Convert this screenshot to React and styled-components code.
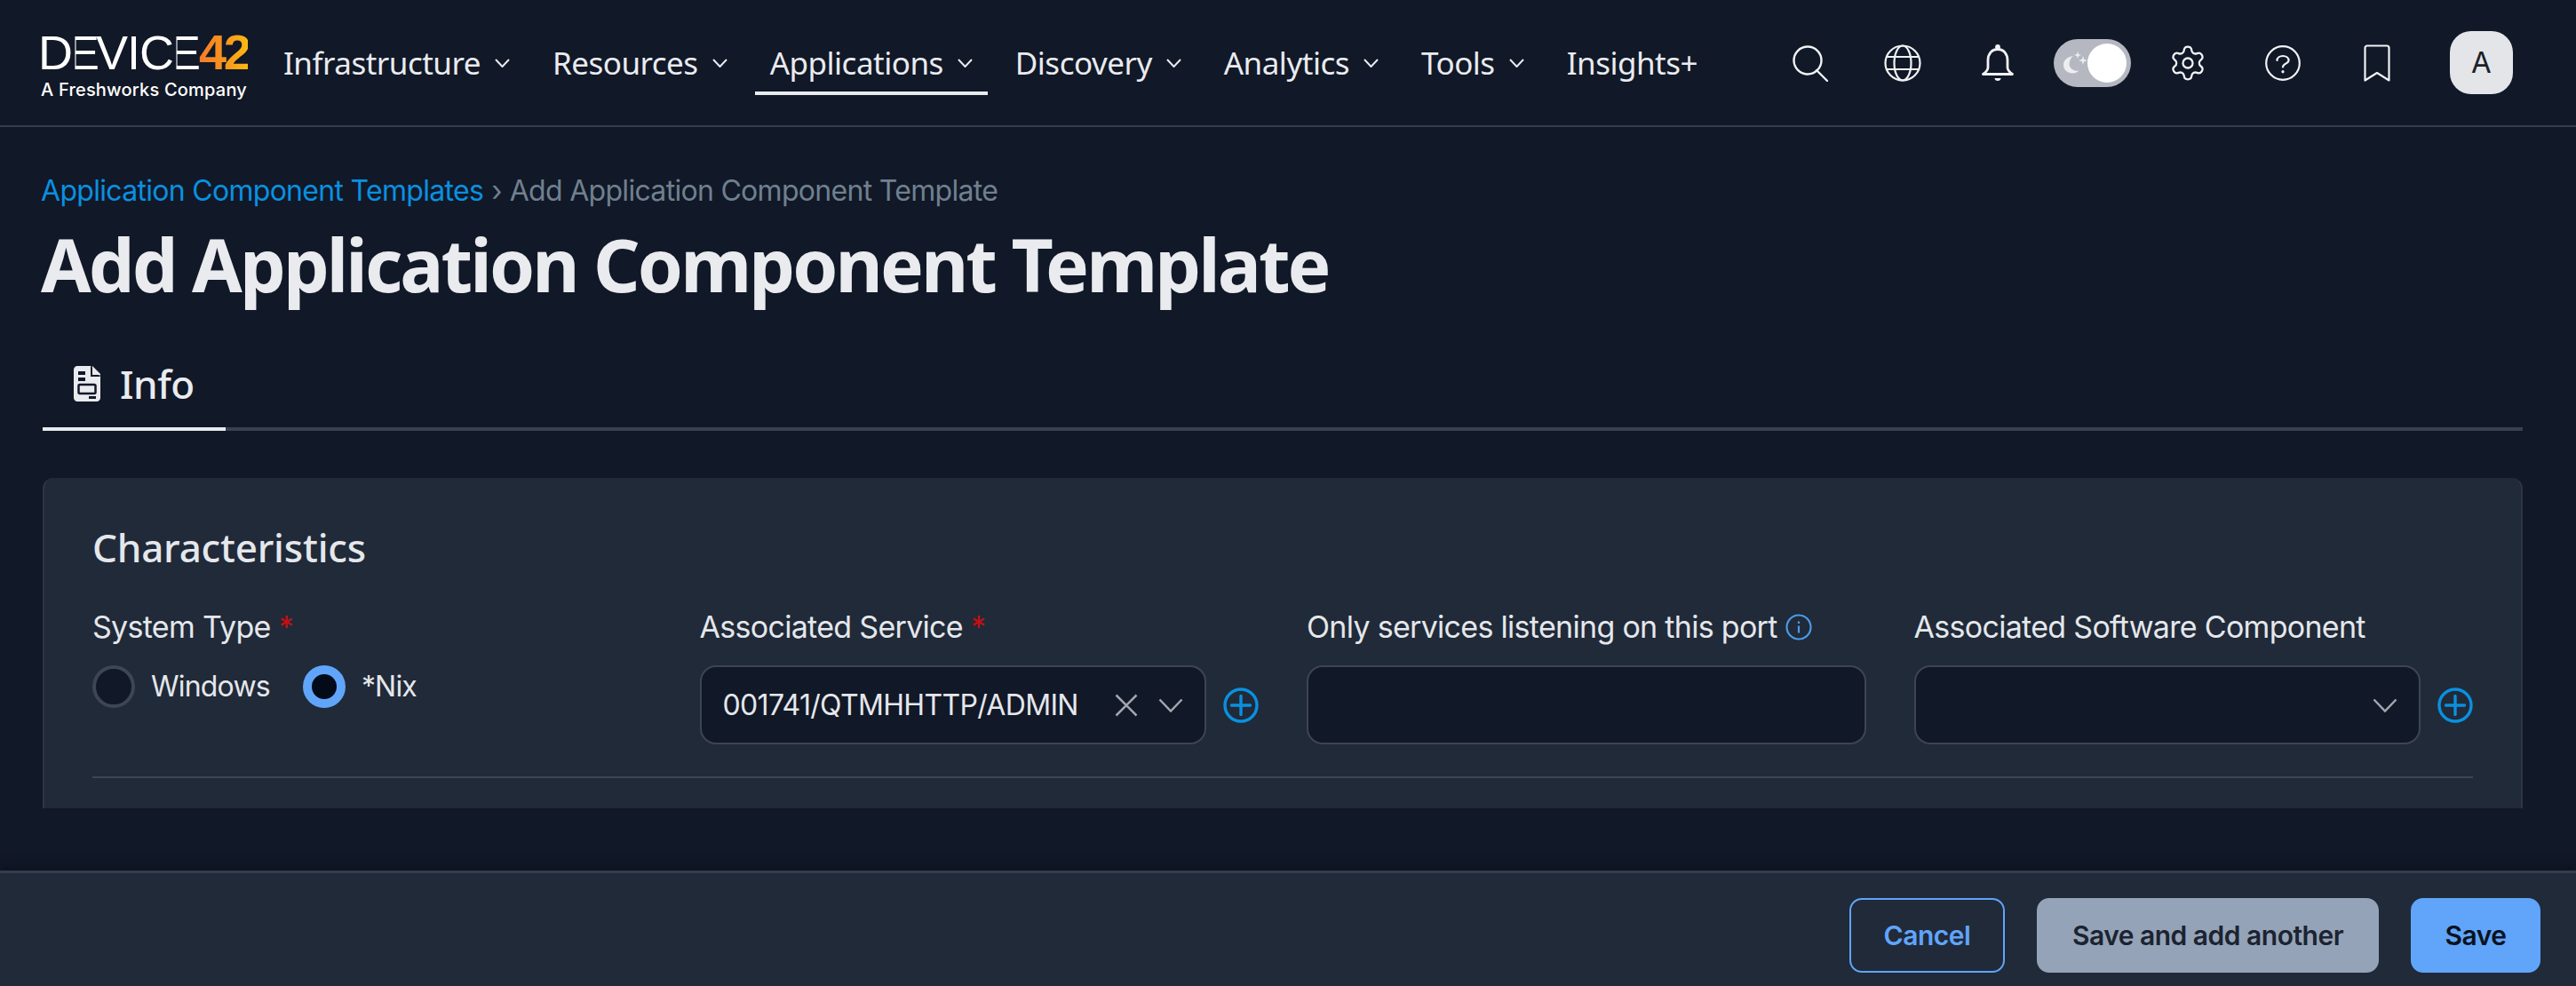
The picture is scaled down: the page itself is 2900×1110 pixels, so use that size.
import React from "react";
import styled, { createGlobalStyle } from "styled-components";
import { Settings } from "lucide-react";

const GlobalStyle = createGlobalStyle`
  html, body {
    margin: 0;
    padding: 0;
    background: #111827;
  }
  * { box-sizing: border-box; }
`;

const DISPLAY = `"Noto Sans", "Open Sans", sans-serif`;
const BODY = `Inter, "Liberation Sans", sans-serif`;

/* ---------- header ---------- */

const Page = styled.div`
  width: 2900px;
  height: 1110px;
  display: flex;
  flex-direction: column;
  background: #111827;
  overflow: hidden;
`;

const Header = styled.header`
  height: 143px;
  flex: none;
  display: flex;
  align-items: center;
  padding: 0 71px 0 46px;
  border-bottom: 2px solid #353c4b;
`;

const Logo = styled.div`
  width: 232px;
  flex: none;
  display: flex;
  flex-direction: column;
  margin-top: 8px;
  color: #fff;
`;

const LogoMark = styled.div`
  display: flex;
  align-items: center;
  height: 42px;
  margin-left: -3px;
  font: 400 54px/42px "Liberation Sans", sans-serif;
  letter-spacing: -1px;
`;

const LogoE = styled.span`
  display: inline-block;
  clip-path: inset(0 0 0 24%);
  margin: 0 -3px 0 -5px;
`;

const Logo42 = styled.span`
  font-weight: 700;
  font-size: 56px;
  margin-left: 2px;
  letter-spacing: -3.5px;
  background: linear-gradient(90deg, #f47b2a 0%, #f7941d 50%, #fdb913 100%);
  -webkit-background-clip: text;
  background-clip: text;
  color: transparent;
`;

const LogoSub = styled.div`
  margin-top: 10px;
  font: 500 20px/22px ${BODY};
  letter-spacing: 0.2px;
  white-space: nowrap;
`;

const Nav = styled.nav`
  display: flex;
  align-items: center;
  gap: 14px;
  margin-left: 24px;
`;

const NavItem = styled.a`
  height: 68px;
  margin-top: 4px;
  display: flex;
  align-items: center;
  gap: 16px;
  padding: 0 17px;
  border-bottom: 4px solid ${(p) => (p.$active ? "#e9ebef" : "transparent")};
  color: #e9ebef;
  font: 400 35px/44px ${DISPLAY};
  letter-spacing: -0.5px;
  white-space: nowrap;
`;

const HeaderIcons = styled.div`
  margin-left: auto;
  display: flex;
  align-items: center;
`;

const IconSlot = styled.span`
  display: flex;
  justify-content: center;
  width: ${(p) => p.$w}px;
  margin-right: ${(p) => p.$mr || 0}px;

  & > svg {
    flex: none;
  }
`;

const ThemeToggle = styled.div`
  width: 87px;
  height: 54px;
  border-radius: 27px;
  background: #b5b8c0;
  display: flex;
  align-items: center;
  justify-content: space-between;
  padding: 0 5px 0 11px;
  margin-right: 45px;
`;

const ToggleKnob = styled.span`
  width: 44px;
  height: 44px;
  border-radius: 50%;
  background: #fff;
`;

const Avatar = styled.div`
  width: 71px;
  height: 71px;
  border-radius: 24px;
  background: #e3e5e9;
  color: #1d2026;
  display: flex;
  align-items: center;
  justify-content: center;
  font: 400 33px/1 ${BODY};
`;

/* ---------- page title ---------- */

const Main = styled.main`
  flex: 1;
  min-height: 0;
  padding: 54px 60px 0 46px;
`;

const Breadcrumb = styled.div`
  display: flex;
  gap: 9px;
  font: 400 32px/36px ${BODY};
  letter-spacing: -0.7px;
  color: #708090;
`;

const Crumb = styled.a`
  color: #0a90e0;
`;

const Title = styled.h1`
  margin: 14px 0 0;
  color: #e9ebef;
  font: 700 82px/100px ${DISPLAY};
  letter-spacing: -2.9px;
  white-space: nowrap;
`;

const Tabs = styled.div`
  margin: 54px 0 0 2px;
  display: flex;
  border-bottom: 4px solid #374151;
`;

const Tab = styled.div`
  width: 206px;
  height: 84px;
  margin-bottom: -4px;
  display: flex;
  align-items: center;
  gap: 22px;
  padding: 0 0 18px 35px;
  border-bottom: 4px solid #e9ebef;
  color: #e9ebef;
  font: 500 44px/60px ${DISPLAY};
  letter-spacing: -0.5px;
`;

/* ---------- form panel ---------- */

const Panel = styled.section`
  margin: 53px 0 0 2px;
  height: 372px;
  padding: 48px 54px 0 54px;
  background: #202a39;
  border: 2px solid #2d3644;
  border-top: none;
  border-bottom: none;
  border-radius: 12px 12px 0 0;
`;

const PanelTitle = styled.h2`
  margin: 0;
  color: #e5e7eb;
  font: 500 44px/60px ${DISPLAY};
  letter-spacing: -0.2px;
`;

const FieldGrid = styled.div`
  margin-top: 40px;
  display: grid;
  grid-template-columns: repeat(4, 1fr);
  column-gap: 54px;
  padding-bottom: 36px;
  border-bottom: 2px solid #3e4654;
`;

const Field = styled.div`
  display: flex;
  flex-direction: column;
  gap: 23px;
`;

const Label = styled.label`
  display: flex;
  align-items: center;
  gap: 9px;
  height: 40px;
  color: #e5e7eb;
  font: 400 34px/40px ${BODY};
  letter-spacing: -0.7px;
  white-space: nowrap;
`;

const Required = styled.span`
  color: #c60f13;
`;

const RadioRow = styled.div`
  display: flex;
  align-items: center;
`;

const Radio = styled.span`
  width: 48px;
  height: 48px;
  flex: none;
  border-radius: 50%;
  border: ${(p) => (p.$on ? "10px solid #60a5fa" : "4px solid #3d4655")};
  background: ${(p) => (p.$on ? "#030a18" : "#111827")};
`;

const RadioText = styled.span`
  margin: 0 37px 0 18px;
  color: #e5e7eb;
  font: 400 32px/40px ${BODY};
  letter-spacing: -0.8px;
`;

const ControlRow = styled.div`
  display: flex;
  align-items: center;
  gap: 19px;
`;

const Control = styled.div`
  flex: 1;
  min-width: 0;
  height: 89px;
  display: flex;
  align-items: center;
  padding: 0 24px;
  background: #111827;
  border: 2px solid #3d4553;
  border-radius: 18px;
`;

const ControlValue = styled.span`
  flex: 1;
  color: #e5e7eb;
  font: 400 32px/40px ${BODY};
  letter-spacing: -0.66px;
  white-space: nowrap;
`;

const ControlIcon = styled.svg`
  flex: none;
  margin-left: ${(p) => p.$ml || 0}px;
`;

/* ---------- footer ---------- */

const Footer = styled.footer`
  height: 130px;
  flex: none;
  display: flex;
  justify-content: flex-end;
  gap: 36px;
  padding: 28px 40px 0 0;
  background: #202a39;
  border-top: 3px solid #353c4b;
  box-shadow: 0 -6px 12px rgba(5, 10, 20, 0.35);
`;

const Button = styled.button`
  width: ${(p) => p.$w}px;
  height: 84px;
  border-radius: 14px;
  border: 2px solid ${(p) => p.$border};
  background: ${(p) => p.$bg};
  color: ${(p) => p.$color};
  font: 600 30px/1 ${BODY};
  letter-spacing: -0.5px;
`;

/* ---------- icons ---------- */

const Chevron = () => (
  <svg width="17" height="10" viewBox="0 0 17 10" fill="none" stroke="#e9ebef" strokeWidth="2">
    <path d="M1 1l7.500 8L16 1" />
  </svg>
);

const Outline = styled.svg`
  fill: none;
  stroke: #f1f2f4;
  stroke-width: ${(p) => p.$sw || 2.2};
  stroke-linecap: round;
  stroke-linejoin: round;
`;

const SearchIcon = () => (
  <Outline width="40" height="42" viewBox="0 0 40 42" $sw={2.4}>
    <circle cx="17" cy="18" r="15.500" />
    <path d="M27 29l12 12" />
  </Outline>
);

const GlobeIcon = () => (
  <Outline width="42" height="42" viewBox="0 0 42 42">
    <circle cx="21" cy="21" r="19.500" />
    <ellipse cx="21" cy="21" rx="9.500" ry="19.500" />
    <path d="M3 14h36M3 28h36" />
  </Outline>
);

const BellIcon = () => (
  <Outline width="36" height="42" viewBox="0 0 36 42" $sw={2.8}>
    <path d="M18 5.500c-7 0-11 5.500-11 12.500v8c0 3-2 5-5.500 7.500h33c-3.500-2.500-5.500-4.500-5.500-7.500v-8c0-7-4-12.500-11-12.500z" />
    <circle cx="18" cy="3" r="1.500" fill="#f1f2f4" />
    <path d="M14.500 38h7c0 2-1.500 3-3.500 3s-3.500-1-3.500-3z" fill="#f1f2f4" stroke="none" />
  </Outline>
);

const StarsIcon = () => (
  <svg width="27" height="26" viewBox="0 0 27 26" fill="#eceef1">
    <path d="M11 5C4 6 0 10 0 15c0 6 5 9.500 10 9.500 3 0 6-1 7-3-7 1-12-4-10-10 0-2 2-5 4-6.500z" />
    <path d="M16 0l1 3 3 1-3 1-1 3-1-3-3-1 3-1zM22 5l1.200 3.800L27 10l-3.800 1.200L22 15l-1.200-3.800L17 10l3.800-1.200z" />
  </svg>
);

const HelpIcon = () => (
  <Outline width="40" height="42" viewBox="0 0 40 42">
    <circle cx="20" cy="21" r="18.800" />
    <path d="M13.500 18c0-3 3-5 6.500-5s6.500 2 6.500 5c0 3.800-6.500 3.500-6.500 7.500" />
    <path d="M20 30.500v0.300" strokeWidth="3.200" />
  </Outline>
);

const BookmarkIcon = () => (
  <Outline width="30" height="42" viewBox="0 0 30 42">
    <path d="M1.500 40.500V4c0-1.500 1-2.500 2.500-2.500h22c1.500 0 2.500 1 2.500 2.500v36.500L15 32z" />
  </Outline>
);

const FileIcon = () => (
  <svg width="30" height="40" viewBox="0 0 30 40">
    <path d="M4 0h15l11 11v25c0 2-2 4-4 4H4c-2 0-4-2-4-4V4c0-2 2-4 4-4z" fill="#e9ebef" />
    <path d="M19 0v12h11z" fill="#111827" />
    <path d="M21 0l9 9v1h-9z" fill="#e9ebef" />
    <rect x="5" y="6" width="8" height="4" fill="#111827" />
    <rect x="5" y="13" width="8" height="4" fill="#111827" />
    <rect x="5.500" y="21" width="19" height="10" rx="1.500" fill="none" stroke="#111827" strokeWidth="2.500" />
    <rect x="17" y="34" width="8" height="3" fill="#111827" />
  </svg>
);

const PlusCircle = () => (
  <svg width="40" height="40" viewBox="0 0 40 40" fill="none" stroke="#0a90e0" strokeWidth="3.400">
    <circle cx="20" cy="20" r="18" />
    <path d="M20 9.500v21M9.500 20h21" strokeLinecap="round" />
  </svg>
);

const InfoIcon = () => (
  <svg width="30" height="30" viewBox="0 0 30 30" fill="none" stroke="#4b9be8" strokeWidth="2.200">
    <circle cx="15" cy="15" r="13.500" />
    <path d="M15 13.500v8M15 8.500v2.500" />
  </svg>
);

const SelectChevron = () => (
  <ControlIcon $ml={23} width="28" height="16" viewBox="0 0 28 16" fill="none" stroke="#a3a6ad" strokeWidth="2.500">
    <path d="M1.500 1.500L14 14.500 26.500 1.500" />
  </ControlIcon>
);

const ClearIcon = () => (
  <ControlIcon width="26" height="26" viewBox="0 0 26 26" fill="none" stroke="#a3a6ad" strokeWidth="2.500">
    <path d="M1.500 1.500l23 23M24.500 1.500l-23 23" />
  </ControlIcon>
);

/* ---------- component ---------- */

const navItems = [
  { label: "Infrastructure", menu: true },
  { label: "Resources", menu: true },
  { label: "Applications", menu: true, active: true },
  { label: "Discovery", menu: true },
  { label: "Analytics", menu: true },
  { label: "Tools", menu: true },
  { label: "Insights+" },
];

function App() {
  return (
    <Page>
      <GlobalStyle />
      <Header>
        <Logo>
          <LogoMark>
            D<LogoE>E</LogoE>VIC<LogoE>E</LogoE>
            <Logo42>42</Logo42>
          </LogoMark>
          <LogoSub>A Freshworks Company</LogoSub>
        </Logo>
        <Nav>
          {navItems.map((item) => (
            <NavItem key={item.label} $active={item.active}>
              {item.label}
              {item.menu && <Chevron />}
            </NavItem>
          ))}
        </Nav>
        <HeaderIcons>
          <IconSlot $w={40} $mr={63}><SearchIcon /></IconSlot>
          <IconSlot $w={42} $mr={68}><GlobeIcon /></IconSlot>
          <IconSlot $w={36} $mr={45}><BellIcon /></IconSlot>
          <ThemeToggle>
            <StarsIcon />
            <ToggleKnob />
          </ThemeToggle>
          <IconSlot $w={38} $mr={68}>
            <Settings size={44} strokeWidth={1.25} color="#f1f2f4" />
          </IconSlot>
          <IconSlot $w={40} $mr={71}><HelpIcon /></IconSlot>
          <IconSlot $w={30} $mr={67}><BookmarkIcon /></IconSlot>
          <Avatar>A</Avatar>
        </HeaderIcons>
      </Header>

      <Main>
        <Breadcrumb>
          <Crumb>Application Component Templates</Crumb>
          <span>›</span>
          <span>Add Application Component Template</span>
        </Breadcrumb>
        <Title>Add Application Component Template</Title>
        <Tabs>
          <Tab>
            <FileIcon />
            Info
          </Tab>
        </Tabs>

        <Panel>
          <PanelTitle>Characteristics</PanelTitle>
          <FieldGrid>
            <Field>
              <Label>System Type <Required>*</Required></Label>
              <RadioRow>
                <Radio />
                <RadioText>Windows</RadioText>
                <Radio $on />
                <RadioText>*Nix</RadioText>
              </RadioRow>
            </Field>
            <Field>
              <Label>Associated Service <Required>*</Required></Label>
              <ControlRow>
                <Control>
                  <ControlValue>001741/QTMHHTTP/ADMIN</ControlValue>
                  <ClearIcon />
                  <SelectChevron />
                </Control>
                <PlusCircle />
              </ControlRow>
            </Field>
            <Field>
              <Label>Only services listening on this port <InfoIcon /></Label>
              <ControlRow>
                <Control />
              </ControlRow>
            </Field>
            <Field>
              <Label>Associated Software Component</Label>
              <ControlRow>
                <Control>
                  <ControlValue />
                  <SelectChevron />
                </Control>
                <PlusCircle />
              </ControlRow>
            </Field>
          </FieldGrid>
        </Panel>
      </Main>

      <Footer>
        <Button $w={175} $border="#60a5fa" $bg="transparent" $color="#60a5fa">Cancel</Button>
        <Button $w={385} $border="#94a3b8" $bg="#94a3b8" $color="#1c2330">Save and add another</Button>
        <Button $w={146} $border="#60a5fa" $bg="#60a5fa" $color="#0b1220">Save</Button>
      </Footer>
    </Page>
  );
}

export default App;
